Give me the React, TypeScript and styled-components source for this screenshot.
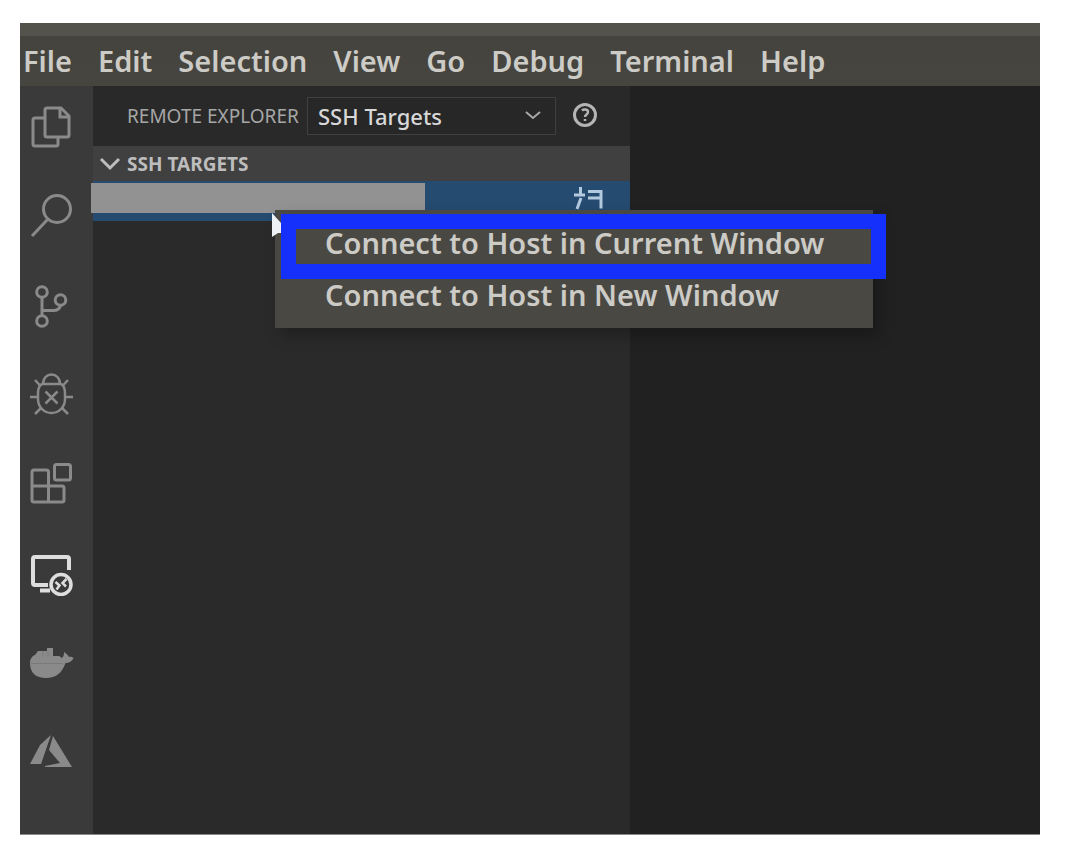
import React from 'react';
import styled, { createGlobalStyle, css } from 'styled-components';

const GlobalStyle = createGlobalStyle`
  * { box-sizing: border-box; }
  body { margin: 0; background: #ffffff; font-family: "Noto Sans", "Open Sans", sans-serif; }
  button, select { font-family: inherit; }
`;

const Page = styled.div`
  display: flex;
  min-height: 100vh;
  padding: 23px 34px 31px 20px;
`;

const Window = styled.div`
  display: flex;
  flex: 1;
  min-width: 0;
  flex-direction: column;
  background: #212121;
  border-bottom: 1px solid #8a8a8a;
`;

const TitleStrip = styled.div`
  height: 13px;
  background: #53524b;
`;

const MenuBar = styled.nav`
  display: flex;
  align-items: center;
  gap: 26px;
  height: 50px;
  padding-left: 3px;
  background: linear-gradient(#44433d, #464540);
`;

const MenuBarButton = styled.button`
  padding: 0;
  border: 0;
  background: none;
  color: #cccbc6;
  font-size: 29px;
  font-weight: 600;
  line-height: 36px;
`;

const Workbench = styled.div`
  display: flex;
  flex: 1;
`;

const ActivityBar = styled.div`
  display: flex;
  flex: none;
  flex-direction: column;
  gap: 41px;
  width: 73px;
  padding: 17px 0 0 7px;
  background: #3a3a3a;
`;

const ActivityButton = styled.button<{ $active?: boolean }>`
  display: block;
  width: 48px;
  height: 48px;
  padding: 0;
  border: 0;
  background: none;
  color: ${(p) => (p.$active ? '#dedede' : '#8a8a8a')};
`;

const Drawing = styled.svg<{ $filled?: boolean }>`
  display: block;
  flex: none;
  ${(p) =>
    p.$filled
      ? css`
          fill: currentColor;
        `
      : css`
          fill: none;
          stroke: currentColor;
          stroke-width: 3;
        `}
`;

const SideBar = styled.aside`
  display: flex;
  flex: 0 0 537px;
  flex-direction: column;
  background: #2a2a2a;
`;

const SideHeader = styled.header`
  display: flex;
  align-items: center;
  height: 60px;
  padding-left: 34px;
  background: #292929;
`;

const SideTitle = styled.label`
  width: 180px;
  color: #a6a6a6;
  font-size: 19px;
  line-height: 24px;
  white-space: nowrap;
`;

const SelectBox = styled.div`
  display: grid;
  align-items: center;
  width: 249px;
  height: 38px;
  margin-right: 16px;
  color: #a8a8a8;
  > * { grid-area: 1 / 1; }
  > svg { justify-self: end; margin-right: 15px; pointer-events: none; }
`;

const Select = styled.select`
  width: 100%;
  height: 100%;
  padding: 0 10px;
  appearance: none;
  border: 1px solid #404040;
  border-radius: 0;
  background: #272727;
  color: #d8d8d8;
  font-size: 22px;
  font-weight: 500;
`;

const IconButton = styled.button`
  display: flex;
  padding: 0;
  border: 0;
  background: none;
  color: #b4b4b4;
`;

const SectionHeader = styled.button`
  display: flex;
  align-items: center;
  gap: 6px;
  height: 35px;
  padding: 0 6px;
  border: 0;
  background: #404040;
  color: #bdbdbd;
  font-size: 19px;
  font-weight: 700;
  line-height: 24px;
`;

const TargetRow = styled.div`
  position: relative;
  display: flex;
  align-items: flex-start;
  justify-content: space-between;
  height: 40px;
  padding: 2px 26px 0 0;
  background: #264b70;
`;

const RowAction = styled(IconButton)`
  color: #b3c9df;
`;

const RedactedName = styled.div`
  width: 334px;
  height: 30px;
  margin-left: -2px;
  background: #929292;
`;

const ContextMenu = styled.div`
  position: absolute;
  z-index: 1;
  top: 29px;
  left: 182px;
  width: 598px;
  padding: 7px 0;
  background: #494843;
  box-shadow: 6px 8px 14px rgba(0, 0, 0, 0.25);
`;

const ContextItem = styled.button`
  display: block;
  width: 100%;
  height: 52px;
  padding: 0 0 0 50px;
  border: 0;
  background: none;
  color: #cccbc6;
  font-size: 29px;
  font-weight: 600;
  line-height: 36px;
  text-align: left;
  white-space: nowrap;
`;

const Pointer = styled(Drawing)`
  position: absolute;
  top: 0;
  left: -5px;
  color: #eef2f6;
`;

const Highlight = styled.div`
  position: absolute;
  top: 4px;
  right: -13px;
  left: 6px;
  height: 65px;
  border: 15px solid #1430fa;
  pointer-events: none;
`;

const Editor = styled.main`
  flex: 1;
  background: #212121;
`;

const menus = ['File', 'Edit', 'Selection', 'View', 'Go', 'Debug', 'Terminal', 'Help'];

type Activity = { label: string; filled?: boolean; active?: boolean; art: React.ReactNode };

const activities: Activity[] = [
  {
    label: 'Explorer',
    art: (
      <>
        <path d="M20 5h14l8 8v19a2 2 0 0 1-2 2H20a2 2 0 0 1-2-2V7a2 2 0 0 1 2-2z" />
        <path d="M33 5v9h9" />
        <path d="M18 15H8a2 2 0 0 0-2 2v24a2 2 0 0 0 2 2h21a2 2 0 0 0 2-2v-7" />
      </>
    ),
  },
  {
    label: 'Search',
    art: (
      <>
        <circle cx="30" cy="17" r="13.5" />
        <path d="M21 27 5 44" />
      </>
    ),
  },
  {
    label: 'Source Control',
    art: (
      <>
        <circle cx="15" cy="11" r="5.3" />
        <circle cx="15" cy="40" r="5.3" />
        <circle cx="33.5" cy="19" r="5.3" />
        <path d="M15 16.5v18M33.5 24.5c-1 3.5-3 5-7 5H15" />
      </>
    ),
  },
  {
    label: 'Debug',
    art: (
      <g strokeWidth="2.5">
        <path d="M11 23c0-5 2-9 5-9h17c3 0 5 4 5 9v6c0 8-6 14-13.5 14S11 37 11 29z" />
        <path d="M16 14c0-6 4-9.5 8.5-9.5S33 8 33 14" />
        <path d="M3 27h8M38 27h8M8 10l5.5 6M41 10l-5.5 6M8 44l6-6M41 44l-6-6" />
        <path d="m18.5 21.5 12 12m0-12-12 12" />
      </g>
    ),
  },
  {
    label: 'Extensions',
    art: (
      <>
        <rect x="27.5" y="5.5" width="16" height="15.5" rx="2" />
        <path d="M21.5 27V13a2 2 0 0 0-2-2H7a2 2 0 0 0-2 2v28a2 2 0 0 0 2 2h28a2 2 0 0 0 2-2V29a2 2 0 0 0-2-2H5M21.5 27v16" />
      </>
    ),
  },
  {
    label: 'Remote Explorer',
    active: true,
    art: (
      <>
        <path strokeWidth="4" d="M42 22V11a2 2 0 0 0-2-2H8a2 2 0 0 0-2 2v24a2 2 0 0 0 2 2h13M13 42.5h10" />
        <circle cx="34" cy="36.5" r="10" strokeWidth="3.5" />
        <path strokeWidth="2.5" d="m28.5 34 4 3.5-3 4M39.5 31l-4 4 3.5 3.5" />
      </>
    ),
  },
  {
    label: 'Docker',
    filled: true,
    art: (
      <>
        <path d="M3 26c0-4 2-7 5-8l3-4h9v-3h6v8h6l3 2c2-2 2-4 2-6 2 1 4 3 5 5 2-.5 3 0 4.5 1-1 3-5 5-8 5C35 36 29 41 19 41 9 41 3 36 3 26z" />
        <path d="M4 26.5h32M16 14v6M21 14v6" stroke="#7a7a7a" strokeWidth="1" />
      </>
    ),
  },
  {
    label: 'Azure',
    filled: true,
    art: (
      <>
        <path d="M24 9 13 19 3 38h11z" />
        <path d="m26 10 19 31H18v-1l15-3-11-13z" />
      </>
    ),
  },
];

export default function App() {
  return (
    <>
      <GlobalStyle />
      <Page>
        <Window>
          <TitleStrip />
          <MenuBar aria-label="Application menu">
            {menus.map((name) => (
              <MenuBarButton key={name}>{name}</MenuBarButton>
            ))}
          </MenuBar>
          <Workbench>
            <ActivityBar>
              {activities.map(({ label, filled, active, art }) => (
                <ActivityButton key={label} aria-label={label} $active={active}>
                  <Drawing $filled={filled} width="48" height="48" viewBox="0 0 48 48">
                    {art}
                  </Drawing>
                </ActivityButton>
              ))}
            </ActivityBar>
            <SideBar>
              <SideHeader>
                <SideTitle htmlFor="target-kind">REMOTE EXPLORER</SideTitle>
                <SelectBox>
                  <Select id="target-kind" defaultValue="ssh">
                    <option value="ssh">SSH Targets</option>
                  </Select>
                  <Drawing width="16" height="10" viewBox="0 0 16 10">
                    <path d="m1 1 7 6 7-6" strokeWidth="2" />
                  </Drawing>
                </SelectBox>
                <IconButton aria-label="Help">
                  <Drawing width="26" height="26" viewBox="0 0 26 26">
                    <circle cx="13" cy="12" r="10.5" />
                    <path d="M10 7.5c2-2 6-1 6 1.5s-3 2.5-3 5M13 16v2" strokeWidth="2.5" />
                  </Drawing>
                </IconButton>
              </SideHeader>
              <SectionHeader aria-expanded="true">
                <Drawing width="22" height="14" viewBox="0 0 22 14">
                  <path d="m2 2 9 9 9-9" />
                </Drawing>
                SSH TARGETS
              </SectionHeader>
              <TargetRow>
                <RedactedName />
                <RowAction aria-label="Connect to Host in New Window">
                  <Drawing width="32" height="30" viewBox="0 0 32 30">
                    <path d="M2 12h11M8.5 4v8M9 15l-4 11M16 8.5h13v17M16 15h13" />
                  </Drawing>
                </RowAction>
                <ContextMenu>
                  <ContextItem>Connect to Host in Current Window</ContextItem>
                  <ContextItem>Connect to Host in New Window</ContextItem>
                  <Pointer $filled width="20" height="28" viewBox="0 0 20 28">
                    <path d="M2 3v24l6-4h12z" />
                  </Pointer>
                  <Highlight />
                </ContextMenu>
              </TargetRow>
            </SideBar>
            <Editor />
          </Workbench>
        </Window>
      </Page>
    </>
  );
}
